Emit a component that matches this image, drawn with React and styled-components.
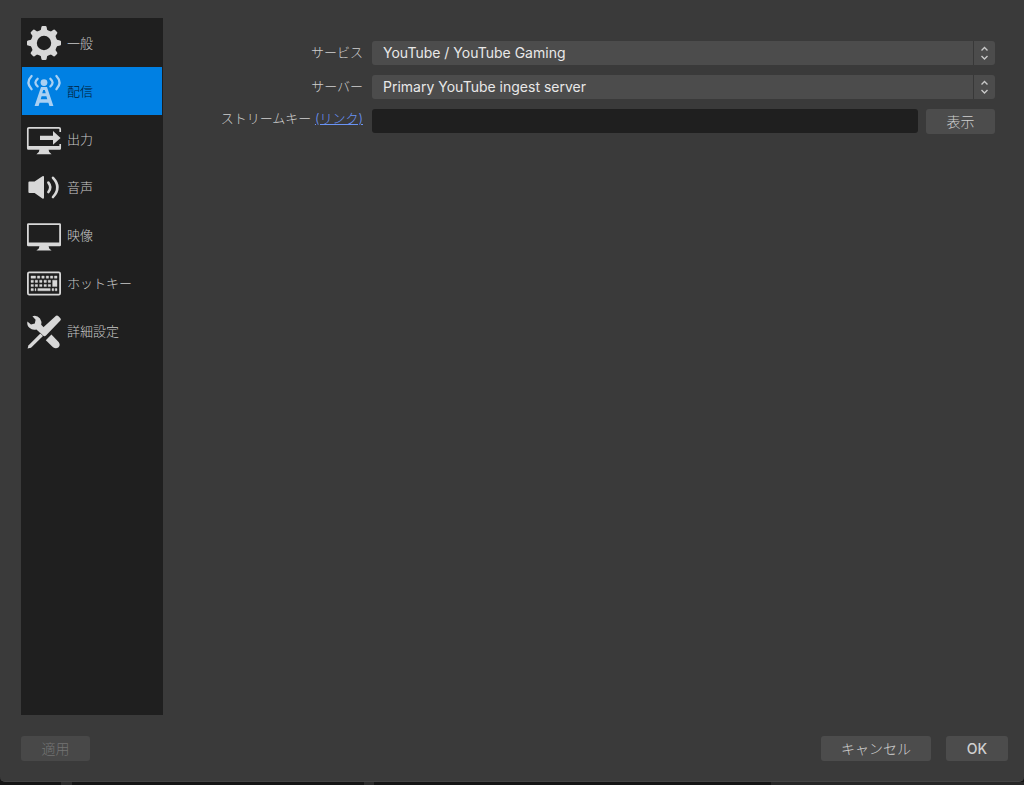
import { useState } from "react"
import styled, { createGlobalStyle, css } from "styled-components"

const teeth = [0, 45, 90, 135, 180, 225, 270, 315]

const GearIcon = () => (
  <Icon viewBox="0 0 34 34">
    <circle cx="17" cy="17" r="10.2" fill="none" stroke="currentColor" strokeWidth="6" />
    {teeth.map(angle => (
      <path
        key={angle}
        d="M12 6 L13.8 4 L14.4 1 Q14.6 0 15.6 0 H18.4 Q19.4 0 19.6 1 L20.2 4 L22 6 Z"
        transform={`rotate(${angle} 17 17)`}
      />
    ))}
  </Icon>
)

const StreamIcon = () => (
  <Icon viewBox="0 0 34 34">
    <circle cx="17" cy="8.6" r="3.4" />
    <path
      fillRule="evenodd"
      d="M14 13 H20 L26.4 32 H22.4 L21.4 28.8 H12.6 L11.6 32 H7.6 Z M16.2 16 L15.2 19.2 H18.8 L17.8 16 Z M14.6 22.2 L13.7 25.2 H20.3 L19.4 22.2 Z"
    />
    <g fill="none" stroke="currentColor" strokeWidth="2.3" strokeLinecap="round">
      <path d="M10.6 4.8 Q6.2 8.6 10.6 12.4" />
      <path d="M23.4 4.8 Q27.8 8.6 23.4 12.4" />
      <path d="M4.6 2 Q-1.6 8.6 4.6 15.2" />
      <path d="M29.4 2 Q35.6 8.6 29.4 15.2" />
    </g>
  </Icon>
)

const OutputIcon = () => (
  <Icon viewBox="0 -1 34 34">
    <path d="M33.2 9 V6 Q33.2 4.8 32 4.8 H2 Q0.8 4.8 0.8 6 V25 M33.2 21 V25" fill="none" stroke="currentColor" strokeWidth="1.7" />
    <path d="M0 23 H34 V25.6 Q34 26.8 32.8 26.8 H21.6 L22.2 29 L24.6 31.2 H9.4 L11.8 29 L12.4 26.8 H1.2 Q0 26.8 0 25.6 Z" />
    <path d="M13 12.8 H26 V8 L33.6 14.9 L26 21.8 V17 H13 Z" />
  </Icon>
)

const AudioIcon = () => (
  <Icon viewBox="0 0 34 34">
    <path d="M2.4 11.6 H7.6 L15.4 6.2 Q17 5.4 17 7 V27.6 Q17 29.2 15.4 28.4 L7.6 23 H2.4 Q1.4 23 1.4 22 V12.6 Q1.4 11.6 2.4 11.6 Z" />
    <g fill="none" stroke="currentColor" strokeWidth="2.6" strokeLinecap="round">
      <path d="M21.4 12.6 Q25.2 17.2 21.4 22" />
      <path d="M26 7.8 Q34.8 17.2 26 27" />
    </g>
  </Icon>
)

const VideoIcon = () => (
  <Icon viewBox="0 -1 34 34">
    <path
      fillRule="evenodd"
      d="M1.4 4.2 H32.6 Q34 4.2 34 5.6 V26 Q34 27.2 32.8 27.2 H21.6 L22.2 29.4 L24.6 31.6 H9.4 L11.8 29.4 L12.4 27.2 H1.2 Q0 27.2 0 26 V5.6 Q0 4.2 1.4 4.2 Z M1.8 6 V23.4 H32.2 V6 Z"
    />
  </Icon>
)

const HotkeyIcon = () => (
  <Icon viewBox="0 -1 34 34">
    <rect x="0.9" y="5.4" width="32.2" height="22.2" rx="1.4" fill="none" stroke="currentColor" strokeWidth="1.8" />
    <g stroke="currentColor" strokeWidth="0.4">
      <path d="M4 9h4.6v2.2H4z M10.4 9h2.4v2.2h-2.4z M14.8 9h2.4v2.2h-2.4z M19.2 9h2.4v2.2h-2.4z M23.4 9h2.4v2.2h-2.4z M27.4 9h2.6v2.2h-2.6z" />
      <path d="M4 13.2h2.4v2.2H4z M8.2 13.2h2.4v2.2H8.2z M12.6 13.2h2.4v2.2h-2.4z M17 13.2h2.4v2.2H17z M21.2 13.2h2.4v2.2h-2.4z M25.6 13.2H30v6.4h-4.4z" />
      <path d="M4 17.4h2.4v2.2H4z M8.2 17.4h2.4v2.2H8.2z M12.6 17.4h2.4v2.2h-2.4z M17 17.4h2.4v2.2H17z M21.2 17.4h2.4v2.2h-2.4z" />
      <path d="M4 21.6h2.4v2.2H4z M8 21.6h1v2.2H8z M10.8 21.6h12.4v2.2H10.8z M25 21.6h1.8v2.2H25z M28.2 21.6H30v2.2h-1.8z" />
    </g>
  </Icon>
)

const AdvancedIcon = () => (
  <Icon viewBox="0 -1 34 34">
    <path d="M5.4 1.2 Q10 -0.2 13 3.6 Q15 6.6 14.2 9.8 L17.6 13.2 L13 17.8 L9.4 14.4 Q5.4 15.4 2.4 12.8 Q-0.4 10 0.4 6.4 L4 9.4 L7.8 8.4 L8.6 4.8 Z" />
    <path d="M24.4 19.6 L31.6 27 Q33.8 30 31.6 32.2 Q29 34.4 26 32.2 L18.8 25.2 Z" />
    <path d="M29 0.8 Q30.2 0 31.2 1 L33.4 3.2 Q34.4 4.4 33.4 5.4 L19 20.6 Q17.4 22 16 20.6 L13 17.6 Q12 16.4 13.4 15 Z" />
    <path d="M13.4 18.4 L16 21 L4 32.8 L0.6 33.4 L1.4 30.4 Z" />
  </Icon>
)

const sections = [
  { id: "general", label: "一般", icon: GearIcon },
  { id: "stream", label: "配信", icon: StreamIcon },
  { id: "output", label: "出力", icon: OutputIcon },
  { id: "audio", label: "音声", icon: AudioIcon },
  { id: "video", label: "映像", icon: VideoIcon },
  { id: "hotkeys", label: "ホットキー", icon: HotkeyIcon },
  { id: "advanced", label: "詳細設定", icon: AdvancedIcon },
]

const SelectField = ({ id, options }) => (
  <SelectWrapper>
    <Select id={id}>
      {options.map(option => (
        <option key={option}>{option}</option>
      ))}
    </Select>
    <Stepper viewBox="0 0 20 24">
      <path d="M7 9.5 L10 6.5 L13 9.5 M7 15 L10 18 L13 15" />
    </Stepper>
  </SelectWrapper>
)

export default function App() {
  const [active, setActive] = useState("stream")
  const [visible, setVisible] = useState(false)

  return (
    <>
      <GlobalStyle />
      <Dialog>
        <Main>
          <Sidebar>
            {sections.map(({ id, label, icon: SectionIcon }) => (
              <SidebarItem key={id} $active={id === active} onClick={() => setActive(id)}>
                <SectionIcon />
                <span>{label}</span>
              </SidebarItem>
            ))}
          </Sidebar>
          <Form onSubmit={e => e.preventDefault()}>
            <Label htmlFor="service">サービス</Label>
            <SelectField id="service" options={["YouTube / YouTube Gaming"]} />
            <Label htmlFor="server">サーバー</Label>
            <SelectField id="server" options={["Primary YouTube ingest server"]} />
            <KeyLabel>
              <label htmlFor="key">ストリームキー</label> <Link href="#">(リンク)</Link>
            </KeyLabel>
            <KeyRow>
              <KeyInput id="key" type={visible ? "text" : "password"} />
              <Button type="button" onClick={() => setVisible(!visible)}>
                表示
              </Button>
            </KeyRow>
          </Form>
        </Main>
        <Footer>
          <Button disabled>適用</Button>
          <Actions>
            <Button $size="lg">キャンセル</Button>
            <Button $size="sm">OK</Button>
          </Actions>
        </Footer>
      </Dialog>
      <Backdrop />
    </>
  )
}

const GlobalStyle = createGlobalStyle`
  * {
    box-sizing: border-box;
  }

  body {
    margin: 0;
    background-color: #151515;
    color: #d0d0d0;
    font-family: Inter, "Noto Sans CJK JP", sans-serif;
    font-size: 14px;
    font-weight: 300;
  }

  button, input, select {
    font: inherit;
    color: inherit;
  }
`

const Dialog = styled.div`
  display: flex;
  flex-direction: column;
  min-height: calc(100vh - 3px);
  padding: 18px 16px 20px 21px;
  background-color: #3a3a3a;
  border-bottom: 1px solid #444444;
  border-radius: 0 0 5px 5px;
`

const Backdrop = styled.div`
  height: 3px;
  background: linear-gradient(
    90deg,
    transparent 6%,
    #2c2c2c 6% 7%,
    transparent 7% 35.5%,
    #2c2c2c 35.5% 36.5%,
    transparent 36.5% 75.3%,
    #272727 75.3%
  );
`

const Main = styled.main`
  display: flex;
  flex: 1;
`

const Sidebar = styled.nav`
  display: flex;
  flex-direction: column;
  flex-shrink: 0;
  width: 142px;
  padding: 1px;
  background-color: #1f1f1f;
`

const SidebarItem = styled.button`
  display: flex;
  align-items: center;
  gap: 6px;
  height: 48px;
  padding: 0 5px;
  border: none;
  background: none;
  color: #c8c8c8;
  font-size: 13px;
  text-align: left;

  span {
    padding-bottom: 2px;
  }

  ${props =>
    props.$active &&
    css`
      background-color: #0080e3;
      color: #001a33;

      svg {
        color: #a9d0f3;
      }
    `}
`

const Icon = styled.svg`
  flex-shrink: 0;
  width: 34px;
  height: 34px;
  overflow: visible;
  color: #d8d8d8;
  fill: currentColor;
`

const Form = styled.form`
  display: grid;
  flex: 1;
  grid-template-columns: 200px 1fr;
  align-content: start;
  gap: 10px 9px;
  padding: 23px 13px 0 0;
`

const Label = styled.label`
  font-size: 13px;
  line-height: 22px;
  text-align: right;
`

const KeyLabel = styled.div`
  font-size: 13px;
  line-height: 18px;
  text-align: right;
`

const Link = styled.a`
  color: #6a94f5;
`

const SelectWrapper = styled.div`
  position: relative;
  height: 24px;
`

const Select = styled.select`
  appearance: none;
  display: block;
  width: 100%;
  height: 100%;
  padding: 0 30px 2px 11px;
  border: none;
  border-radius: 3px;
  background-color: #4c4c4c;
  color: #e8e8e8;
  font-weight: 400;
`

const Stepper = styled.svg`
  position: absolute;
  top: 0;
  right: 0;
  width: 22px;
  height: 24px;
  border-left: 1px solid #383838;
  fill: none;
  stroke: #c8c8c8;
  stroke-width: 1.4;
  pointer-events: none;
`

const KeyRow = styled.div`
  display: flex;
  gap: 8px;
`

const KeyInput = styled.input`
  flex: 1;
  min-width: 0;
  height: 24px;
  padding: 0 8px;
  border: none;
  border-radius: 3px;
  background-color: #1f1f1f;
`

const buttonWidths = { sm: "62px", md: "69px", lg: "110px" }

const Button = styled.button`
  width: ${props => buttonWidths[props.$size || "md"]};
  height: 25px;
  padding: 0 0 1px;
  border: none;
  border-radius: 3px;
  background-color: #4c4c4c;
  font-weight: ${props => (props.$size === "sm" ? 500 : 300)};

  &:disabled {
    background-color: #484848;
    color: #747474;
  }
`

const Footer = styled.footer`
  display: flex;
  justify-content: space-between;
  margin-top: 21px;
`

const Actions = styled.div`
  display: flex;
  gap: 15px;
`
